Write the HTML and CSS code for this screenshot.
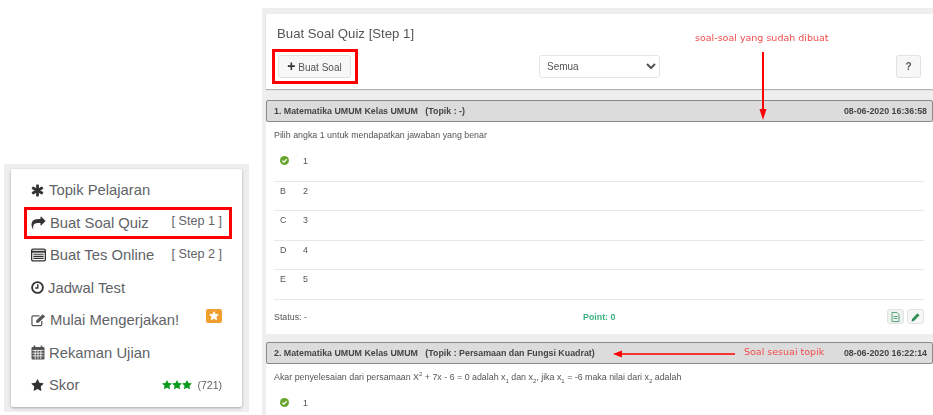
FILE: index.html
```html
<!DOCTYPE html>
<html lang="id">

<head>
    <meta charset="UTF-8">
    <meta name="viewport" content="width=device-width, initial-scale=1.0">
    <link rel="stylesheet" href="styles.css">
    <title>Buat Soal Quiz</title>
</head>

<body>
    <svg class="defs" width="0" height="0">
        <symbol id="star" viewBox="0 0 1792 1792">
            <path d="M1728 647q0 22-26 48l-363 354 86 500q1 7 1 20 0 21-10.500 35.500t-30.500 14.500q-19 0-40-12l-449-236-449 236q-22 12-40 12-21 0-31.500-14.500t-10.500-35.500q0-6 2-20l86-500-364-354q-25-27-25-48 0-37 56-46l502-73 225-455q19-41 49-41t49 41l225 455 502 73q56 9 56 46z" />
        </symbol>
        <symbol id="check" viewBox="0 0 16 16">
            <circle cx="8" cy="8" r="8" fill="#6aa62f" />
            <path d="M4.200 8.200l2.600 2.600 5-5" fill="none" stroke="#fff" stroke-width="2.200" />
        </symbol>
    </svg>

    <aside class="side">
        <ul class="menu">
            <li class="menu-row">
                <span class="menu-label">
                    <svg class="icon" viewBox="0 0 16 16">
                        <g fill="#333">
                            <rect x="6.300" y="0.500" width="3.400" height="15" rx="0.600" />
                            <rect x="6.300" y="0.500" width="3.400" height="15" rx="0.600" transform="rotate(60 8 8)" />
                            <rect x="6.300" y="0.500" width="3.400" height="15" rx="0.600" transform="rotate(120 8 8)" />
                        </g>
                    </svg>
                    Topik Pelajaran
                </span>
            </li>
            <li class="menu-row marked">
                <span class="menu-label">
                    <svg class="icon wide" viewBox="0 0 1792 1792">
                        <path fill="#333" d="M1792 640q0 26-19 45l-512 512q-19 19-45 19t-45-19-19-45v-256h-224q-98 0-175.500 6t-154 21.500-133 42.500-105.500 69.500-80 101-48.500 138.500-17.500 181q0 55 5 123 0 6 2.500 23.500t2.500 26.500q0 15-8.500 25t-23.500 10q-16 0-28-17-7-9-13-22t-13.500-30-10.500-24q-127-285-127-451 0-199 53-333 162-403 875-403h224v-256q0-26 19-45t45-19 45 19l512 512q19 19 19 45z" />
                    </svg>
                    Buat Soal Quiz
                </span>
                <span class="step">[ Step 1 ]</span>
            </li>
            <li class="menu-row">
                <span class="menu-label">
                    <svg class="icon wide" viewBox="0 0 16 14">
                        <rect x="0.700" y="0.700" width="14.600" height="12.600" rx="1.500" fill="none" stroke="#333" stroke-width="1.400" />
                        <path d="M1 3.500h14" stroke="#333" stroke-width="2" />
                        <path d="M2.500 6.200h11M2.500 8.400h11M2.500 10.600h11" stroke="#333" stroke-width="1.200" />
                    </svg>
                    Buat Tes Online
                </span>
                <span class="step">[ Step 2 ]</span>
            </li>
            <li class="menu-row">
                <span class="menu-label">
                    <svg class="icon narrow" viewBox="0 0 14 14">
                        <circle cx="7" cy="7" r="5.800" fill="none" stroke="#333" stroke-width="2" />
                        <path d="M7.300 3.500v4H4.500" fill="none" stroke="#333" stroke-width="1.500" />
                    </svg>
                    Jadwal Test
                </span>
            </li>
            <li class="menu-row">
                <span class="menu-label">
                    <svg class="icon wide" viewBox="0 0 16 14">
                        <path d="M11.500 8v3.500a1.500 1.500 0 0 1-1.500 1.500H2.500A1.500 1.500 0 0 1 1 11.500V4a1.500 1.500 0 0 1 1.500-1.500H9" fill="none" stroke="#555" stroke-width="1.300" />
                        <path d="M5.500 7.500L12.500 0.800l2.500 2.400-7 6.800H5.500z" fill="#555" />
                    </svg>
                    Mulai Mengerjakan!
                </span>
                <span class="badge"><svg class="badge-star"><use href="#star" /></svg></span>
            </li>
            <li class="menu-row">
                <span class="menu-label">
                    <svg class="icon tall" viewBox="0 0 14 15">
                        <rect x="0.500" y="2" width="13" height="12.500" rx="1" fill="#555" />
                        <path d="M3.500 0.500v3M10.500 0.500v3" stroke="#555" stroke-width="1.600" />
                        <path d="M1.500 5.500h11M1.500 8.200h11M1.500 10.900h11M4.200 5v9M7 5v9M9.800 5v9" stroke="#fff" stroke-width="0.800" />
                    </svg>
                    Rekaman Ujian
                </span>
            </li>
            <li class="menu-row">
                <span class="menu-label">
                    <svg class="icon"><use href="#star" /></svg>
                    Skor
                </span>
                <span class="score">
                    <svg class="score-star"><use href="#star" /></svg><svg class="score-star"><use href="#star" /></svg><svg class="score-star"><use href="#star" /></svg>
                    <span class="score-num">(721)</span>
                </span>
            </li>
        </ul>
    </aside>

    <main class="main">
        <section class="panel">
            <h1 class="panel-title">Buat Soal Quiz [Step 1]</h1>
            <div class="toolbar">
                <div class="marked-box">
                    <button type="button" class="btn btn-add"><b class="plus">+</b> Buat Soal</button>
                </div>
                <select class="filter">
                    <option>Semua</option>
                </select>
                <button type="button" class="btn btn-help">?</button>
            </div>
        </section>

        <article class="soal">
            <header class="soal-head">
                <span>1. Matematika UMUM Kelas UMUM &nbsp; (Topik : -)</span>
                <span>08-06-2020 16:36:58</span>
            </header>
            <div class="soal-body">
                <p class="question">Pilih angka 1 untuk mendapatkan jawaban yang benar</p>
                <ul class="options">
                    <li class="option"><span class="opt-key"><svg class="check"><use href="#check" /></svg></span>1</li>
                    <li class="option"><span class="opt-key">B</span>2</li>
                    <li class="option"><span class="opt-key">C</span>3</li>
                    <li class="option"><span class="opt-key">D</span>4</li>
                    <li class="option"><span class="opt-key">E</span>5</li>
                </ul>
                <footer class="soal-foot">
                    <span class="status">Status: -</span>
                    <span class="point">Point: 0</span>
                    <span class="actions">
                        <button type="button" class="btn btn-mini btn-doc">
                            <svg width="9" height="10" viewBox="0 0 9 10">
                                <path d="M1 0.500h5l2 2v7H1z" fill="none" stroke="#5aa37f" />
                                <path d="M2.500 4.500h4M2.500 6.500h4" stroke="#5aa37f" />
                            </svg>
                        </button>
                        <button type="button" class="btn btn-mini">
                            <svg width="9" height="10" viewBox="0 0 9 10">
                                <path d="M0.500 9.500l0.500-2.500L6.500 1.200l2 2L3 9z" fill="#2f8f57" />
                            </svg>
                        </button>
                    </span>
                </footer>
            </div>
        </article>

        <article class="soal">
            <header class="soal-head">
                <span>2. Matematika UMUM Kelas UMUM &nbsp; (Topik : Persamaan dan Fungsi Kuadrat)</span>
                <span>08-06-2020 16:22:14</span>
            </header>
            <div class="soal-body">
                <p class="question">Akar penyelesaian dari persamaan X<sup>2</sup> + 7x - 6 = 0 adalah x<sub>1</sub> dan x<sub>2</sub>, jika x<sub>1</sub> = -6 maka nilai dari x<sub>2</sub> adalah</p>
                <ul class="options">
                    <li class="option"><span class="opt-key"><svg class="check"><use href="#check" /></svg></span>1</li>
                </ul>
            </div>
        </article>
    </main>

    <!-- coretan merah di atas screenshot -->
    <span class="note note-top">soal-soal yang sudah dibuat</span>
    <span class="note note-topik">Soal sesuai topik</span>
    <svg class="arrow arrow-down" width="10" height="68" viewBox="0 0 10 68">
        <path d="M5 0v58" stroke="#f00" stroke-width="2" />
        <path d="M1.500 57h7L5 68z" fill="#f00" />
    </svg>
    <svg class="arrow arrow-left" width="122" height="8" viewBox="0 0 122 8">
        <path d="M8 4h114" stroke="#f00" stroke-width="1.600" />
        <path d="M0 4l9-3.500v7z" fill="#f00" />
    </svg>
</body>

</html>
```

FILE: styles.css
```css
html,
body {
    height: 415px;
    overflow: hidden;
}

body {
    margin: 0;
    background-color: #fff;
    color: #555;
    font-family: "Liberation Sans", Arial, sans-serif;
    display: flex;
    align-items: flex-start;
    /* screenshot aslinya agak buram */
    filter: blur(.35px);
}

ul {
    list-style: none;
    margin: 0;
    padding: 0;
}

.defs {
    position: absolute;
}

/* menu kiri */
.side {
    flex: none;
    width: 245px;
    margin: 164px 0 0 4px;
    padding: 5px 7px;
    box-sizing: border-box;
    background-color: #eee;
}

.menu {
    padding: 5px 10px 5px 13px;
    background-color: #fff;
    border-radius: 2px;
    box-shadow: 0 1px 3px rgba(0, 0, 0, .3);
}

.menu-row {
    height: 32.5px;
    padding: 0 10px 0 7px;
    box-sizing: border-box;
    display: flex;
    align-items: center;
    justify-content: space-between;
    font-size: 14.8px;
    color: #5f6368;
}

.marked {
    outline: 3px solid #f00;
    outline-offset: -3px;
}

.menu-label {
    display: flex;
    align-items: center;
    gap: 5px;
}

.icon {
    width: 13px;
    height: 13px;
    fill: #333;
    flex: none;
}

.icon.wide {
    width: 15px;
    height: 14px;
    margin-right: -1px;
}

.icon.narrow {
    width: 13px;
    height: 13px;
    margin-right: -1px;
}

.icon.tall {
    width: 14px;
    height: 15px;
    margin-right: -1px;
}

.step {
    font-size: 12.6px;
    margin-top: -3px;
}

.badge {
    width: 16px;
    height: 14px;
    margin-top: -8px;
    background-color: #ef9f2f;
    border-radius: 2px;
    display: flex;
    align-items: center;
    justify-content: center;
}

.badge-star {
    width: 10px;
    height: 10px;
    fill: #fff;
}

.score {
    display: flex;
    align-items: center;
    font-size: 10.5px;
}

.score-star {
    width: 10px;
    height: 10px;
    fill: #0a9a1e;
}

.score-num {
    margin-left: 5px;
}

/* isi kanan */
.main {
    flex: none;
    width: 671px;
    height: 407px;
    margin: 8px 0 0 13px;
    padding: 6px 0 0 4px;
    box-sizing: border-box;
    overflow: hidden;
    background-color: #eee;
}

.panel {
    height: 75px;
    background-color: #fff;
    box-shadow: 0 1px 1px rgba(0, 0, 0, .25);
    box-sizing: border-box;
    padding: 12px 6px 0 6px;
    margin-bottom: 11px;
}

.panel-title {
    margin: 0 0 7px 5px;
    font-size: 13.2px;
    line-height: 16px;
    font-weight: normal;
    color: #555;
}

.toolbar {
    display: grid;
    grid-template-columns: 1fr auto 1fr;
    align-items: center;
}

.marked-box {
    justify-self: start;
    padding: 3px 4px 3px 3px;
    border: 3px solid #f00;
}

.btn {
    border: 1px solid #e2e2e2;
    border-radius: 3px;
    background-color: #f7f7f7;
    color: #555;
    font-family: inherit;
    padding: 0;
}

.btn-add {
    display: block;
    width: 73px;
    height: 23px;
    font-size: 10px;
}

.plus {
    color: #333;
    font-size: 14px;
    line-height: 10px;
}

.filter {
    width: 121px;
    height: 23px;
    padding-left: 3px;
    font-family: inherit;
    font-size: 10px;
    color: #555;
    background-color: #fff;
    border: 1px solid #e5e5e5;
    border-radius: 3px;
}

.btn-help {
    justify-self: end;
    width: 25px;
    height: 23px;
    margin-right: 6px;
    font-size: 10px;
    font-weight: bold;
}

.soal {
    margin-bottom: 8px;
}

.soal-head {
    height: 22px;
    padding: 0 5px 0 7px;
    box-sizing: border-box;
    display: flex;
    align-items: center;
    justify-content: space-between;
    background-color: #dcdcdc;
    border: 1px solid #8a8a8a;
    border-radius: 2px;
    color: #444;
    font-size: 8.85px;
    font-weight: bold;
}

.soal-body {
    padding: 0 9px 0 8px;
    background-color: #fff;
}

.question {
    margin: 0;
    height: 30px;
    padding-top: 8px;
    box-sizing: border-box;
    font-size: 8.85px;
    line-height: 10px;
}

sup,
sub {
    font-size: 6px;
    line-height: 0;
}

.option {
    height: 29.5px;
    padding-top: 4px;
    box-sizing: border-box;
    display: flex;
    font-size: 8.85px;
    line-height: 10px;
    border-bottom: 1px solid #e8e8e8;
}

.opt-key {
    width: 29px;
    padding-left: 6px;
    box-sizing: border-box;
}

.check {
    width: 9px;
    height: 9px;
}

.soal-foot {
    height: 34px;
    display: grid;
    grid-template-columns: 309px 1fr auto;
    align-items: center;
    font-size: 8.85px;
}

.point {
    color: #3cb07f;
    font-weight: bold;
}

.actions {
    display: flex;
    gap: 3px;
}

.btn-mini {
    width: 17px;
    height: 15px;
    display: flex;
    align-items: center;
    justify-content: center;
}

.btn-doc {
    background-color: #edf4ef;
}

/* anotasi */
.note {
    position: absolute;
    color: #f24b4b;
    font-family: "DejaVu Sans", sans-serif;
    font-size: 9.5px;
    line-height: 12px;
    white-space: nowrap;
}

.note-top {
    left: 695px;
    top: 32px;
}

.note-topik {
    left: 744px;
    top: 346px;
}

.arrow {
    position: absolute;
}

.arrow-down {
    left: 758px;
    top: 52px;
}

.arrow-left {
    left: 613px;
    top: 350px;
}
```
